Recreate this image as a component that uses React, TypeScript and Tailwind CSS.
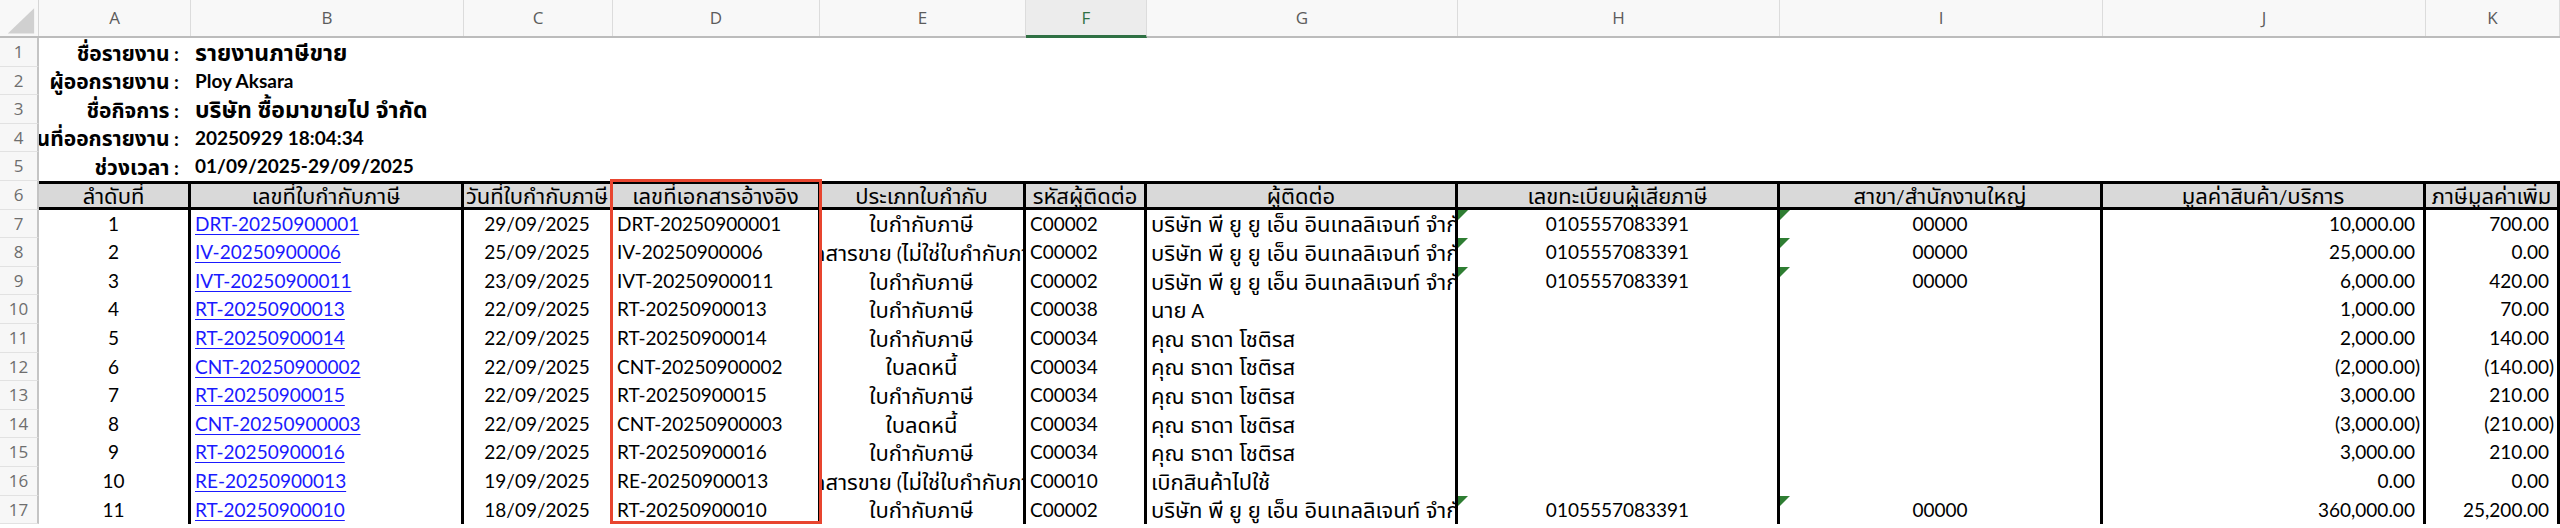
import React from "react";

const FONT = "font-['Lato','Noto_Sans_Thai','Noto_Sans_Thai_UI','Tahoma','Noto_Sans',sans-serif]";

type Align = "l" | "c" | "r";
type Size = "s" | "m" | "l";

const W = [
  "w-[152px]",
  "w-[273px]",
  "w-[149px]",
  "w-[207px]",
  "w-[206px]",
  "w-[121px]",
  "w-[311px]",
  "w-[322px]",
  "w-[323px]",
  "w-[323px]",
  "w-[134px]",
];

const BR = [
  "border-r-[3px]",
  "border-r-[3px]",
  "border-r-[3px]",
  "border-r-[2px]",
  "border-r-[3px]",
  "border-r-[3px]",
  "border-r-[3px]",
  "border-r-[3px]",
  "border-r-[3px]",
  "border-r-[3px]",
  "border-r-[3px]",
];

const LETTERS = ["A", "B", "C", "D", "E", "F", "G", "H", "I", "J", "K"];

const justify = (a: Align) =>
  a === "l" ? "justify-start pl-[4px]" : a === "r" ? "justify-end pr-[3px]" : "justify-center";

const THAI_SIZE: Record<Size, string> = {
  s: "text-[21px]",
  m: "text-[22px]",
  l: "text-[23px]",
};

// Render text as one inline run, enlarging Thai runs to match the reference's Thai glyph size
function T({ s, size = "m" }: { s: string; size?: Size }) {
  const parts = s.split(/([\u0E00-\u0E7F]+(?:\s+[\u0E00-\u0E7F]+)*)/);
  return (
    <span className="whitespace-pre">
      {parts.map((p, i) =>
        /[\u0E00-\u0E7F]/.test(p) ? (
          <span key={i} className={THAI_SIZE[size]}>
            {p}
          </span>
        ) : (
          <React.Fragment key={i}>{p}</React.Fragment>
        )
      )}
    </span>
  );
}

function RowHead({ n }: { n: number }) {
  return (
    <div className="w-[39px] shrink-0 h-full bg-[#f7f7f7] border-r-[2px] border-r-[#c4c4c4] border-b border-b-[#e2e2e2] flex items-center justify-center text-[17px] text-[#6e6e6e] font-['Open_Sans',sans-serif] font-normal">
      {n}
    </div>
  );
}

function Tri() {
  return (
    <span className="absolute top-0 left-0 w-0 h-0 border-t-[10px] border-t-[#2e7d32] border-r-[10px] border-r-transparent" />
  );
}

const Num = ({ v }: { v: string }) =>
  v.startsWith("(") ? (
    <span>{v}</span>
  ) : (
    <span>
      {v}
      <span className="invisible">)</span>
    </span>
  );

const CO = "บริษัท พี ยู ยู เอ็น อินเทลลิเจนท์ จำกัด";
const TN = "คุณ ธาดา โชติรส";
const TAX = "ใบกำกับภาษี";
const NOT = "เอกสารขาย (ไม่ใช่ใบกำกับภาษี)";
const CN = "ใบลดหนี้";

const data: [string, string, string, string, string, string, string, string, string, string, string, boolean][] = [
  ["1", "DRT-20250900001", "29/09/2025", "DRT-20250900001", TAX, "C00002", CO, "0105557083391", "00000", "10,000.00", "700.00", true],
  ["2", "IV-20250900006", "25/09/2025", "IV-20250900006", NOT, "C00002", CO, "0105557083391", "00000", "25,000.00", "0.00", true],
  ["3", "IVT-20250900011", "23/09/2025", "IVT-20250900011", TAX, "C00002", CO, "0105557083391", "00000", "6,000.00", "420.00", true],
  ["4", "RT-20250900013", "22/09/2025", "RT-20250900013", TAX, "C00038", "นาย A", "", "", "1,000.00", "70.00", false],
  ["5", "RT-20250900014", "22/09/2025", "RT-20250900014", TAX, "C00034", TN, "", "", "2,000.00", "140.00", false],
  ["6", "CNT-20250900002", "22/09/2025", "CNT-20250900002", CN, "C00034", TN, "", "", "(2,000.00)", "(140.00)", false],
  ["7", "RT-20250900015", "22/09/2025", "RT-20250900015", TAX, "C00034", TN, "", "", "3,000.00", "210.00", false],
  ["8", "CNT-20250900003", "22/09/2025", "CNT-20250900003", CN, "C00034", TN, "", "", "(3,000.00)", "(210.00)", false],
  ["9", "RT-20250900016", "22/09/2025", "RT-20250900016", TAX, "C00034", TN, "", "", "3,000.00", "210.00", false],
  ["10", "RE-20250900013", "19/09/2025", "RE-20250900013", NOT, "C00010", "เบิกสินค้าไปใช้", "", "", "0.00", "0.00", false],
  ["11", "RT-20250900010", "18/09/2025", "RT-20250900010", TAX, "C00002", CO, "0105557083391", "00000", "360,000.00", "25,200.00", true],
];

const ALIGN: Align[] = ["c", "l", "c", "l", "c", "l", "l", "c", "c", "r", "r"];

const headers = [
  "ลำดับที่",
  "เลขที่ใบกำกับภาษี",
  "วันที่ใบกำกับภาษี",
  "เลขที่เอกสารอ้างอิง",
  "ประเภทใบกำกับ",
  "รหัสผู้ติดต่อ",
  "ผู้ติดต่อ",
  "เลขทะเบียนผู้เสียภาษี",
  "สาขา/สำนักงานใหญ่",
  "มูลค่าสินค้า/บริการ",
  "ภาษีมูลค่าเพิ่ม",
];

const info: [string, string][] = [
  ["ชื่อรายงาน :", "รายงานภาษีขาย"],
  ["ผู้ออกรายงาน :", "Ploy Aksara"],
  ["ชื่อกิจการ :", "บริษัท ซื้อมาขายไป จำกัด"],
  ["วันที่ออกรายงาน :", "20250929 18:04:34"],
  ["ช่วงเวลา :", "01/09/2025-29/09/2025"],
];

export default function App() {
  return (
    <div className={`w-[2560px] h-[528px] overflow-hidden bg-white text-black ${FONT}`}>
      {/* column letters */}
      <div className="flex h-[38px] bg-[#f8f8f8] border-b-[2px] border-b-[#bcbcbc]">
        <div className="w-[39px] shrink-0 border-r border-r-[#d6d6d6] flex items-end justify-end">
          <svg width="39" height="36" viewBox="0 0 39 36">
            <polygon points="8,34 35,34 35,8" fill="#d0d0d0" />
          </svg>
        </div>
        {LETTERS.map((l, i) =>
          l === "F" ? (
            <div
              key={l}
              className={`${W[i]} shrink-0 flex items-center justify-center bg-[#ececec] border-r border-r-[#dcdcdc] border-b-[3px] border-b-[#2f7043] text-[17px] text-[#2f7043] font-['Open_Sans',sans-serif] -mb-[2px]`}
            >
              {l}
            </div>
          ) : (
            <div
              key={l}
              className={`${W[i]} shrink-0 flex items-center justify-center border-r border-r-[#dcdcdc] text-[17px] text-[#5c5c5c] font-['Open_Sans',sans-serif]`}
            >
              {l}
            </div>
          )
        )}
      </div>

      <div className="relative">
        {/* info rows */}
        {info.map(([label, value], r) => (
          <div key={r} className="flex h-[28.6px] text-[19px] font-bold">
            <RowHead n={r + 1} />
            <div className={`${W[0]} shrink-0 flex items-center justify-end pr-[12px] overflow-hidden whitespace-nowrap`}>
              <T s={label} size="s" />
            </div>
            <div className={`${W[1]} shrink-0 flex items-center pl-[4px] whitespace-nowrap`}>
              <T s={value} size="l" />
            </div>
          </div>
        ))}

        {/* header row */}
        <div className="flex h-[28.6px] text-[19px]">
          <RowHead n={6} />
          {headers.map((h, i) => (
            <div
              key={i}
              className={`${W[i]} shrink-0 ${BR[i]} border-r-black border-y-[3px] border-y-black bg-[#d9d9d9] flex items-center justify-center overflow-hidden whitespace-nowrap`}
            >
              <T s={h} />
            </div>
          ))}
        </div>

        {/* data rows */}
        {data.map((row, r) => (
          <div key={r} className="flex h-[28.6px] text-[19px]">
            <RowHead n={r + 7} />
            {row.slice(0, 11).map((v, i) => {
              const tri = row[11] && (i === 7 || i === 8);
              return (
                <div
                  key={i}
                  className={`${W[i]} shrink-0 ${BR[i]} border-r-black relative flex items-center ${justify(ALIGN[i])} overflow-hidden whitespace-nowrap`}
                >
                  {tri && <Tri />}
                  {i === 1 ? (
                    <span className="text-[#1a1aff] underline decoration-1 underline-offset-[3px]">{v as string}</span>
                  ) : i >= 9 ? (
                    <Num v={v as string} />
                  ) : (
                    <T s={v as string} />
                  )}
                </div>
              );
            })}
          </div>
        ))}

        {/* red highlight box */}
        <div className="absolute left-[610px] top-[141px] w-[212px] h-[345px] border-[3px] border-[#e8452f] pointer-events-none" />
      </div>
    </div>
  );
}
